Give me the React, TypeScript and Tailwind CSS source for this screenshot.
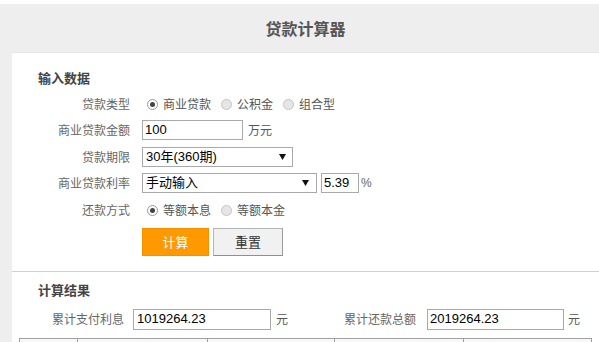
import React from "react";

const cjk = { fontFamily: '"Noto Sans CJK SC", "Liberation Sans", sans-serif' };
const mix = { fontFamily: '"Liberation Sans", "Noto Sans CJK SC", sans-serif' };

function Radio({ checked, label }: { checked?: boolean; label: string }) {
  return (
    <span className="flex items-center">
      <span
        className={
          "flex h-[11px] w-[11px] items-center justify-center rounded-full border " +
          (checked ? "border-[#999] bg-white" : "border-[#c4c4c4] bg-[#e6e6e6]")
        }
      >
        {checked && <span className="h-[5px] w-[5px] rounded-full bg-[#444]" />}
      </span>
      <span className="ml-[5px] text-[12px] text-[#555]">{label}</span>
    </span>
  );
}

function Arrow() {
  return (
    <svg width="7" height="6" viewBox="0 0 7 6">
      <path d="M0 0 L7 0 L3.5 6 Z" fill="#111" />
    </svg>
  );
}

function Label({ children }: { children: React.ReactNode }) {
  return <div className="w-[118px] shrink-0 text-right text-[12px] text-[#666]">{children}</div>;
}

export default function App() {
  return (
    <div className="w-[599px] h-[342px] overflow-hidden bg-white pt-[4px]" style={cjk}>
      <div className="bg-[#eeeeee] pl-[12px] h-[338px]">
        <div className="h-[49px] flex items-center justify-center border-b border-[#e6e6e6]">
          <span className="text-[16px] font-bold text-[#555]">贷款计算器</span>
        </div>
        <div className="bg-white h-full">
          <div className="pt-[16px]">
            <div className="h-[18px] pl-[26px] flex items-center text-[13px] font-bold text-[#444]">输入数据</div>
            <div className="mt-[4px] flex h-[26px] items-center">
              <Label>贷款类型</Label>
              <div className="ml-[17px] flex items-center gap-[10px]">
                <Radio checked label="商业贷款" />
                <Radio label="公积金" />
                <Radio label="组合型" />
              </div>
            </div>
            <div className="flex h-[26px] items-center">
              <Label>商业贷款金额</Label>
              <div
                className="ml-[12px] flex h-[20px] w-[101px] items-center border border-[#a9a9a9] pl-[2px] text-[13px] text-black"
                style={mix}
              >
                100
              </div>
              <span className="ml-[5px] text-[12px] text-[#555]">万元</span>
            </div>
            <div className="flex h-[27px] items-center">
              <Label>贷款期限</Label>
              <div
                className="ml-[12px] flex h-[20px] w-[151px] items-center justify-between border border-[#a9a9a9] pl-[3px] pr-[6px] text-[13px] text-black"
                style={mix}
              >
                <span>30年(360期)</span>
                <Arrow />
              </div>
            </div>
            <div className="flex h-[26px] items-center">
              <Label>商业贷款利率</Label>
              <div
                className="ml-[12px] flex h-[20px] w-[175px] items-center justify-between border border-[#a9a9a9] pl-[3px] pr-[7px] text-[13px] text-black"
                style={mix}
              >
                <span>手动输入</span>
                <Arrow />
              </div>
              <div
                className="ml-[4px] flex h-[20px] w-[38px] items-center border border-[#a9a9a9] pl-[2px] text-[13px] text-black"
                style={mix}
              >
                5.39
              </div>
              <span className="ml-[2px] text-[12px] text-[#666]" style={mix}>%</span>
            </div>
            <div className="flex h-[28px] items-center">
              <Label>还款方式</Label>
              <div className="ml-[17px] flex items-center gap-[10px]">
                <Radio checked label="等额本息" />
                <Radio label="等额本金" />
              </div>
            </div>
            <div className="mt-[4px] flex pl-[130px] gap-[4px]">
              <div className="flex h-[28px] w-[67px] items-center justify-center border border-[#f39200] bg-[#ff9900] text-[13px] text-white">
                计算
              </div>
              <div className="flex h-[28px] w-[70px] items-center justify-center border border-[#b5b5b5] border-b-[#8f8f8f] border-r-[#9a9a9a] bg-[#f1f1f1] text-[13px] text-[#333]">
                重置
              </div>
            </div>
          </div>
          <div className="mt-[15px] border-t border-[#d0d0d0] pt-[9px]">
            <div className="h-[18px] pl-[26px] flex items-center text-[13px] font-bold text-[#444]">计算结果</div>
            <div className="mt-[7px] flex h-[26px] items-center pl-[40px]">
              <span className="w-[72px] text-[12px] text-[#666]">累计支付利息</span>
              <div
                className="ml-[9px] flex h-[21px] w-[138px] items-center border border-[#a9a9a9] pl-[3px] text-[13px] text-black"
                style={mix}
              >
                1019264.23
              </div>
              <span className="ml-[5px] text-[12px] text-[#555]">元</span>
              <span className="ml-[56px] w-[73px] text-[12px] text-[#666]">累计还款总额</span>
              <div
                className="ml-[10px] flex h-[21px] w-[137px] items-center border border-[#a9a9a9] pl-[2px] text-[13px] text-black"
                style={mix}
              >
                2019264.23
              </div>
              <span className="ml-[4px] text-[12px] text-[#555]">元</span>
            </div>
            <div className="mt-[6px] ml-[7px] flex h-[20px] w-[573px] border-l border-t border-[#a0a0a0] bg-[#f7f7f7]">
              <div className="w-[58px] border-r border-[#a0a0a0]" />
              <div className="w-[130px] border-r border-[#a0a0a0]" />
              <div className="w-[128px] border-r border-[#a0a0a0]" />
              <div className="w-[129px] border-r border-[#a0a0a0]" />
              <div className="w-[128px] border-r border-[#a0a0a0]" />
            </div>
          </div>
        </div>
      </div>
    </div>
  );
}
